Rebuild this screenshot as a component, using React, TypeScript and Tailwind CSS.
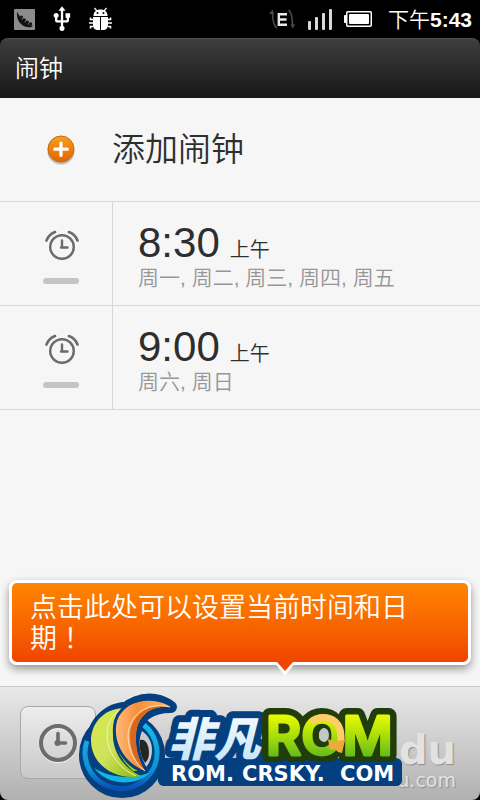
import { MdUsb } from "react-icons/md";

type Alarm = {
  id: number;
  time: string;
  period: string;
  days: string;
};

const alarms: Alarm[] = [
  { id: 1, time: "8:30", period: "上午", days: "周一, 周二, 周三, 周四, 周五" },
  { id: 2, time: "9:00", period: "上午", days: "周六, 周日" },
];

function PeaPodIcon() {
  return (
    <svg className="size-[21px]" viewBox="0 0 21 21" aria-hidden="true">
      <rect width="21" height="21" rx="1" fill="#8c8c8c" />
      <path d="M3 3c1 1 1 2 2 3 4 7 8 9 14 11-2 2-8 2-12-2C3 11 3 7 3 3z" fill="#111" />
      <circle cx="7.5" cy="8" r="1.5" fill="#111" />
      <circle cx="10" cy="11" r="1.8" fill="#111" />
      <circle cx="13.2" cy="13.2" r="1.8" fill="#111" />
      <circle cx="16.6" cy="14.8" r="1.6" fill="#111" />
    </svg>
  );
}

function DebugIcon() {
  return (
    <svg className="h-6 w-[23px]" viewBox="0 0 23 24" aria-hidden="true">
      <g fill="none" stroke="#fff" strokeWidth="1.2">
        <path d="M5.500 1l2.500 3M17.500 1L15 4" />
        <path d="M4 12.500H1.500v-2M4 16H0M4 19.500H1.500v2M19 12.500h2.500v-2M19 16h4M19 19.500h2.500v2" strokeWidth="1.6" />
      </g>
      <path d="M4.500 9C4.500 5 7 2.500 11.500 2.500S18.500 5 18.500 9z" fill="#fff" />
      <path d="M4 10h7v13H9c-3 0-5-2-5-5zM12 10h7v8c0 3-2 5-5 5h-2z" fill="#fff" />
      <circle cx="8.500" cy="6" r="1" fill="#000" />
      <circle cx="14.500" cy="6" r="1" fill="#000" />
    </svg>
  );
}

function EdgeIcon() {
  return (
    <svg className="h-5 w-[27px]" viewBox="0 0 27 20" aria-hidden="true">
      <g fill="none" stroke="#4a4a4a" strokeWidth="1.6">
        <path d="M8 19C4.500 17 3.500 12 3.500 3" />
        <path d="M19.500 1c3 2 4 7 4 16" />
      </g>
      <path d="M0 5l3.500-4.500L5 5zM21.500 15.500h5l-3 4z" fill="#4a4a4a" />
      <path d="M18 5.200H9.800v10.600H18M9.800 10.500h7.700" fill="none" stroke="#e8e8e8" strokeWidth="2.400" />
    </svg>
  );
}

function SignalIcon() {
  return (
    <svg className="h-[21px] w-6" viewBox="0 0 24 21" fill="#d8d8d8" aria-hidden="true">
      <rect y="12" width="3" height="9" rx="1" />
      <rect x="7" y="8" width="3" height="13" rx="1" />
      <rect x="14" y="4" width="3" height="17" rx="1" />
      <rect x="21" width="3" height="21" rx="1" />
    </svg>
  );
}

function BatteryIcon() {
  return (
    <svg className="h-4 w-7" viewBox="0 0 28 16" aria-hidden="true">
      <rect y="4" width="4" height="8" rx="1" fill="#fff" />
      <rect x="2.750" y=".75" width="24.500" height="14.500" rx="1" fill="#000" stroke="#fff" strokeWidth="1.500" />
      <rect x="5" y="3" width="20" height="10" rx="1" fill="#fff" />
    </svg>
  );
}

function AddIcon() {
  return (
    <svg className="h-8 w-[30px]" viewBox="0 0 30 32" aria-hidden="true">
      <defs>
        <linearGradient id="add-fill" x1="0" y1="0" x2="0" y2="1">
          <stop offset="0" stopColor="#f9a01c" />
          <stop offset="1" stopColor="#e36400" />
        </linearGradient>
      </defs>
      <circle cx="15" cy="17.500" r="13.500" fill="#000" opacity=".12" />
      <circle cx="15" cy="16.500" r="13.500" fill="#000" opacity=".15" />
      <circle cx="15" cy="15" r="13" fill="url(#add-fill)" stroke="#c96a10" />
      <path d="M15 9v12.500M8.800 15.200h12.500" stroke="#fff" strokeWidth="3.200" strokeLinecap="round" />
    </svg>
  );
}

function AlarmIcon() {
  return (
    <svg className="h-8 w-9" viewBox="0 0 36 32" fill="none" stroke="#6b6b6b" strokeLinecap="round" aria-hidden="true">
      <circle cx="19" cy="18" r="11.800" strokeWidth="2.400" />
      <path d="M19 11.500V18.500M18 18.500h6.500" strokeWidth="2.400" />
      <path d="M3.500 11.500C5 7.500 8 4.500 12 3M34.500 11.500C33 7.500 30 4.500 26 3" strokeWidth="2.600" />
    </svg>
  );
}

function ClockIcon() {
  return (
    <svg className="size-10" viewBox="0 0 40 40" fill="none" aria-hidden="true">
      <g stroke="#f4f4f4" transform="translate(0 1)">
        <circle cx="20" cy="20" r="17" strokeWidth="4" />
      </g>
      <g stroke="#6c6c6c">
        <circle cx="20" cy="20" r="17" strokeWidth="4" />
        <path d="M20 10.500V20h7.500" strokeWidth="3.600" strokeLinecap="round" />
      </g>
      <circle cx="19.500" cy="20" r="3" fill="#6c6c6c" />
    </svg>
  );
}

function RomLogo() {
  return (
    <svg className="h-[110px] w-[330px]" viewBox="76 690 330 110" role="img" aria-label="非凡ROM ROM.CRSKY.COM">
      <defs>
        <linearGradient id="lime" x1="0" y1="0" x2="1" y2="1">
          <stop offset="0" stopColor="#d9e94e" />
          <stop offset=".5" stopColor="#cfe25a" />
          <stop offset="1" stopColor="#86b60c" />
        </linearGradient>
        <linearGradient id="orange" x1="0" y1="0" x2="1" y2="0">
          <stop offset="0" stopColor="#ffb978" />
          <stop offset=".4" stopColor="#f78f3c" />
          <stop offset="1" stopColor="#ffb76a" />
        </linearGradient>
        <linearGradient id="cyan" x1="0" y1="0" x2="0" y2="1">
          <stop offset="0" stopColor="#18b9e8" />
          <stop offset=".7" stopColor="#0a92d6" />
          <stop offset="1" stopColor="#0a4fb4" />
        </linearGradient>
        <linearGradient id="ice" x1="0" y1="0" x2="0" y2="1">
          <stop offset="0" stopColor="#fff" />
          <stop offset="1" stopColor="#bfe2f8" />
        </linearGradient>
        <linearGradient id="green" gradientUnits="userSpaceOnUse" x1="0" y1="716" x2="0" y2="758">
          <stop offset="0" stopColor="#e6fa00" />
          <stop offset=".5" stopColor="#a6dc0a" />
          <stop offset="1" stopColor="#5eb81e" />
        </linearGradient>
      </defs>

      <g fill="#043f7f" stroke="#043f7f" strokeWidth="12" strokeLinejoin="round">
        <circle cx="122" cy="755" r="37" />
        <path d="M123 708C96 712 86 740 97 757C106 773 125 780 141 776z" />
        <path d="M145 771C120 762 110 740 117 720C124 702 145 697 160 701Q168 704 171 707C152 707 137 715 136 735z" />
      </g>
      <path d="M144 725A36 36 0 1 1 87 741" fill="none" stroke="url(#cyan)" strokeWidth="5" />
      <path d="M94 768c10 13 27 17 42 13 6-2 10-4 14-9-16 8-40 6-56-4z" fill="#12b4e2" />
      <path d="M142 731C149 736 152 743 152 750C152 758 149 764 146 767C140 756 137 743 142 731z" fill="#c8cbcd" />
      <path d="M140 740c6-2 9 6 9 13 0 5-2 8-4 10-4-6-6-15-5-23z" fill="#252525" />
      <path d="M123 708C92 710 84 742 97 760C106 773 125 780 141 776C115 764 103 734 123 708z" fill="url(#lime)" />
      <path d="M121 709C97 724 105 762 136 776" fill="none" stroke="#eff7a8" strokeWidth="1" />
      <path d="M123 708C112 722 109 750 133 771L145 771L120 740z" fill="#9cc61c" />
      <path
        d="M145 771C124 763 112 741 117 721C123 703 143 698 159 702Q167 704 170 707C152 705 137 715 136 735C135 749 139 761 145 771z"
        fill="url(#orange)"
        stroke="#043f7f"
        strokeWidth="6"
        strokeLinejoin="round"
        className="[paint-order:stroke]"
      />
      <path d="M170 707C148 702 131 716 130 735C130 750 136 763 145 771C139 761 135 749 136 735C137 715 152 705 170 707z" fill="#d9661e" />
      <path d="M170 707C146 701 129 716 128 735C128 751 135 763 145 771" fill="none" stroke="#ffe1b8" strokeWidth="1" />

      <rect x="158" y="758" width="244" height="28" rx="6" fill="#043f7f" />
      <text
        x="168"
        y="756"
        fontSize="46"
        className="font-['Noto_Sans_CJK_SC',sans-serif] font-black italic [paint-order:stroke]"
        fill="url(#ice)"
        stroke="#043f7f"
        strokeWidth="14"
        strokeLinejoin="round"
      >
        非凡
      </text>
      <text
        x="266"
        y="755"
        fontSize="54"
        className="font-[Inter,sans-serif] font-semibold"
        fill="#203d0a"
        stroke="#203d0a"
        strokeWidth="16"
        strokeLinejoin="round"
      >
        ROM
      </text>
      <ellipse cx="324" cy="735" rx="5" ry="7" fill="#c4c8c4" />
      <text
        x="266"
        y="755"
        fontSize="54"
        className="font-[Inter,sans-serif] font-semibold"
        fill="url(#green)"
        stroke="url(#green)"
        strokeWidth="3"
        strokeLinejoin="round"
      >
        ROM
      </text>
      <path d="M311 722C322 713 340 717 341 736V741" fill="none" stroke="#ffcd68" strokeWidth="7" />
      <path d="M328 739l5 2 12-1-3 13-4-1-3-3-5 1z" fill="#efaa38" />
      <rect x="158" y="762" width="244" height="24" rx="6" fill="#043f7f" />
      <text y="781" fontSize="21" className="font-['DejaVu_Sans',sans-serif] font-bold" fill="#fff">
        <tspan x="171">ROM.</tspan>
        <tspan x="242">CRSKY.</tspan>
        <tspan x="340">COM</tspan>
      </text>
    </svg>
  );
}

function StatusBar() {
  return (
    <div className="flex h-[38px] items-center justify-between pr-2 pl-[14px]">
      <div className="flex items-center gap-[13px]">
        <PeaPodIcon />
        <MdUsb className="size-7" />
        <DebugIcon />
      </div>
      <div className="flex items-center gap-3">
        <EdgeIcon />
        <SignalIcon />
        <BatteryIcon />
        <span className="ml-1 pt-[2px] text-[21px] leading-6 font-bold">
          <span className="font-[350]">下午</span>5:43
        </span>
      </div>
    </div>
  );
}

function AlarmRow({ alarm }: { alarm: Alarm }) {
  return (
    <li className="flex h-[104px] border-b border-[#d6d6d6]">
      <button
        type="button"
        aria-label="开关闹钟"
        className="flex w-[113px] shrink-0 flex-col items-center gap-[17px] border-r border-[#d6d6d6] pt-[27px] pl-[10px]"
      >
        <AlarmIcon />
        <span className="h-[6px] w-9 rounded-full bg-[#c4c4c4]" />
      </button>
      <div className="min-w-0 flex-1 pt-[17px] pl-[25px]">
        <p className="flex items-baseline gap-[10px] text-[#2e2e2e]">
          <span className="text-[42px] leading-[48px]">{alarm.time}</span>
          <span className="text-[20px] leading-6 font-[350]">{alarm.period}</span>
        </p>
        <p className="text-[21px] leading-[22px] font-[350] text-[#969696]">{alarm.days}</p>
      </div>
    </li>
  );
}

export default function App() {
  return (
    <div className="flex min-h-screen flex-col bg-black font-['Liberation_Sans','Noto_Sans_CJK_SC',sans-serif] text-white">
      <StatusBar />
      <header className="flex h-[60px] items-center rounded-t-lg border-t border-[#505050] bg-linear-to-b from-[#3e3e3e] to-[#181818] pl-[15px]">
        <h1 className="text-[24px] leading-8 font-[350]">闹钟</h1>
      </header>

      <main className="flex flex-1 flex-col bg-[#f6f6f6]">
        <button
          type="button"
          className="flex h-[104px] items-center border-b border-[#d6d6d6] text-left text-[#2e2e2e]"
        >
          <span className="flex w-[112px] shrink-0 justify-center pl-[10px]">
            <AddIcon />
          </span>
          <span className="text-[33px] leading-[42px] font-[350]">添加闹钟</span>
        </button>
        <ul>
          {alarms.map((alarm) => (
            <AlarmRow key={alarm.id} alarm={alarm} />
          ))}
        </ul>

        <div className="relative mx-[9px] mt-auto mb-[21px] rounded-lg border-3 border-white bg-linear-to-b from-[#ff8500] to-[#f04400] px-[18px] pt-[10px] pb-2 shadow-[0_4px_8px_rgba(0,0,0,0.4)]">
          <p className="text-[27px] leading-[30px] font-[350]">
            点击此处可以设置当前时间和日期
            <span className="font-['Noto_Sans_CJK_TC',sans-serif] leading-none" lang="zh-TW">！</span>
          </p>
          <svg className="absolute top-full left-[262px] h-[15px] w-[22px]" viewBox="0 0 22 15" aria-hidden="true">
            <path d="M0 0h22L11 14z" fill="#fff" />
            <path d="M3 0h16L11 9z" fill="#f04400" />
          </svg>
        </div>
      </main>

      <footer className="relative h-[114px] rounded-b-lg border-t border-[#c8c8c8] bg-linear-to-b from-[#e9e9e9] to-[#b1b1b1] pt-[19px] pl-5">
        <button
          type="button"
          aria-label="设置时间和日期"
          className="flex h-[73px] w-[76px] items-center justify-center rounded-lg border border-[#a8a8a8] bg-linear-to-b from-[#ededed] to-[#c9c9c9]"
        >
          <ClockIcon />
        </button>
        <div className="absolute right-6 bottom-2 text-right font-['DejaVu_Sans',sans-serif] text-[#e2e2e2] [text-shadow:1px_1px_1px_#8c8c8c]">
          <p className="text-[40px] leading-9 font-bold">du</p>
          <p className="text-[19px] leading-6">u.com</p>
        </div>
        <div className="absolute bottom-0 left-[76px]">
          <RomLogo />
        </div>
      </footer>
    </div>
  );
}
